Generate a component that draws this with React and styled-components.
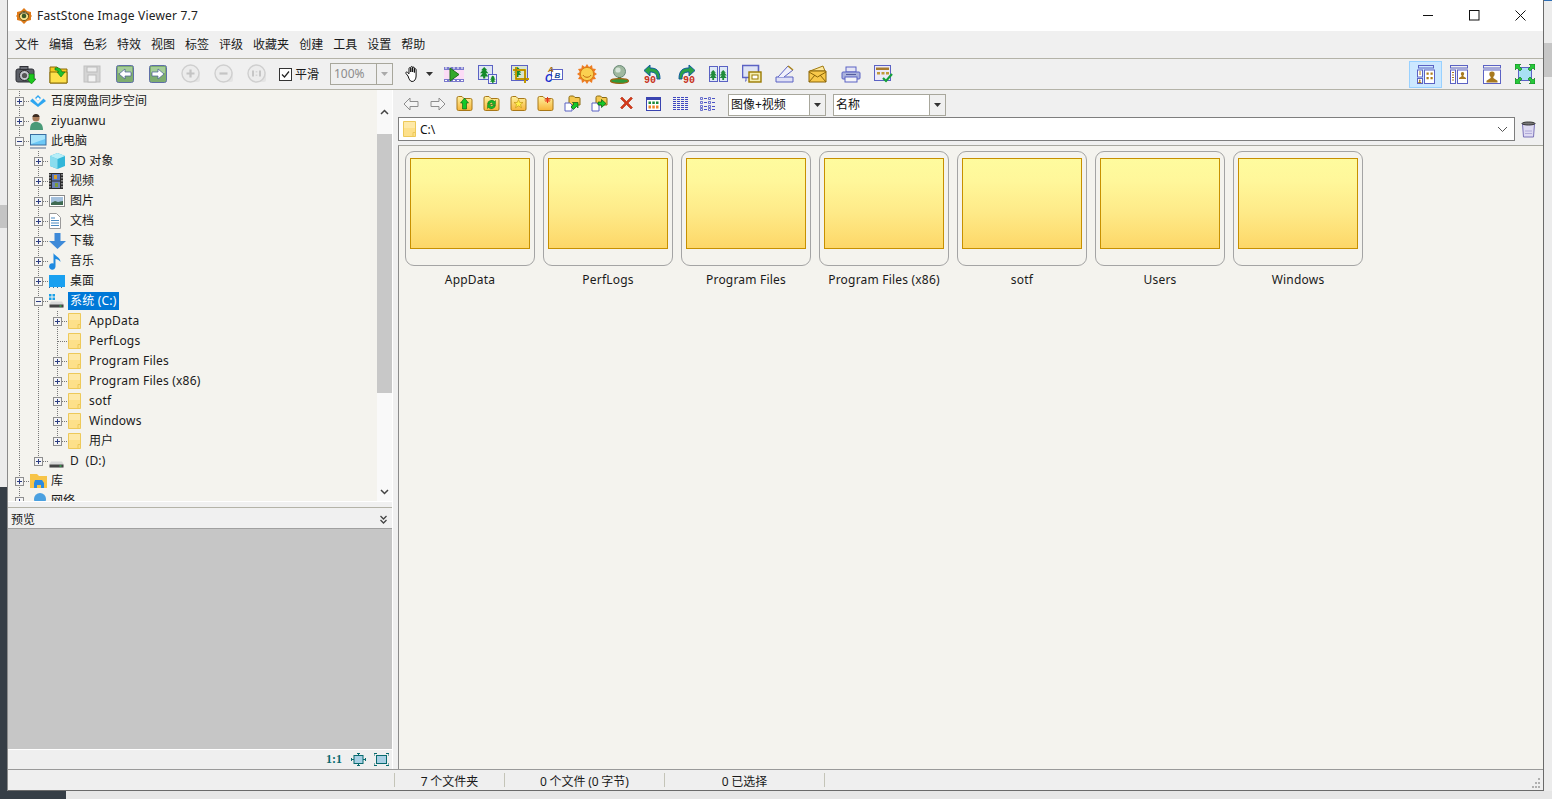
import React from 'react';
import styled, { createGlobalStyle } from 'styled-components';

const UI = '"Noto Sans","Noto Sans CJK SC",sans-serif';

const Global = createGlobalStyle`
  html, body { margin: 0; padding: 0; height: 100%; overflow: hidden; }
  body { font-family: ${UI}; font-size: 12px; color: #1a1a1a; }
  svg { display: block; }
`;

const Desktop = styled.div`
  width: 1552px; height: 799px; box-sizing: border-box; padding-left: 8px; overflow: hidden;
  background:
    linear-gradient(#2f6fb5, #2f6fb5) 1544px 0 / 8px 1px no-repeat,
    linear-gradient(#c6c6c6, #c6c6c6) 1544px 43px / 8px 34px no-repeat,
    linear-gradient(#c4c4c4, #c4c4c4) 0 205px / 8px 23px no-repeat,
    linear-gradient(#363e46, #363e46) 0 487px / 8px 312px no-repeat,
    linear-gradient(#363e46, #363e46) 0 791px / 66px 8px no-repeat,
    linear-gradient(#e6e6e6, #e6e6e6) 0 791px / 1552px 8px no-repeat,
    #ececec;
`;

const Win = styled.div`
  width: 1536px; height: 791px; box-sizing: border-box; display: flex; flex-direction: column;
  background: #f0f0f0; border-right: 1px solid #6a6a6a; border-bottom: 1px solid #6a6a6a;
  box-shadow: -1px 0 0 #8a8a8a;
`;

const TitleBar = styled.div`
  height: 31px; flex: none; background: #fff; display: flex; align-items: center; padding-left: 7px;
`;
const TitleText = styled.span`
  margin-left: 4px; font-size: 12px; letter-spacing: .2px; color: #222;
`;
const WinBtns = styled.div`margin-left: auto; display: flex; height: 31px;`;
const WinBtn = styled.div`
  width: 46px; display: flex; align-items: center; justify-content: center;
`;

const MenuBar = styled.div`
  height: 27px; flex: none; display: flex; align-items: center; padding-left: 7px; gap: 10px;
  background: #f0f0f0;
`;
const MenuItem = styled.span`font-size: 12px; line-height: 16px; color: #1a1a1a;`;

const MainBar = styled.div`
  height: 30px; flex: none; display: flex; align-items: center; padding-left: 1px;
  border-top: 1px solid #b4b3a8; border-bottom: 1px solid #b4b3a8; background: #f0f0f0;
`;
const ToolBtn = styled.div`
  width: ${p => p.$w || 33}px; height: 26px; flex: none; display: flex; align-items: center; justify-content: center;
`;
const ViewBtn = styled(ToolBtn)`
  height: 27px; box-sizing: border-box;
  ${p => p.$active && 'background:#cce8ff;border:1px solid #99d1ff;'}
`;
const Spacer = styled.div`flex: 1;`;
const Check = styled.label`
  display: flex; align-items: center; gap: 3px; margin-left: 6px; font-size: 12px; width: 46px;
`;
const CheckBox = styled.span`
  width: 11px; height: 11px; border: 1px solid #333; background: #fff; display: block; flex: none;
`;
const ZoomBox = styled.div`
  display: flex; width: 63px; height: 22px; box-sizing: border-box; border: 1px solid #a8a79c; margin-left: 5px;
`;
const ZoomValue = styled.div`
  flex: 1; border-right: 1px solid #a8a79c; padding-left: 3px; color: #8c8c8c; font-size: 12px; line-height: 20px;
`;
const ZoomDrop = styled.div`
  width: 15px; display: flex; align-items: center; justify-content: center;
`;
const HandWrap = styled.div`
  width: 46px; margin-left: -1px; display: flex; align-items: center; justify-content: flex-start; gap: 4px; padding-left: 12px; box-sizing: border-box;
`;

const Body = styled.div`flex: 1; min-height: 0; display: flex;`;

const LeftPane = styled.div`
  width: 384px; flex: none; display: flex; flex-direction: column; border-right: 1px solid #fff;
`;
const TreeArea = styled.div`
  height: 412px; flex: none; display: flex; background: #f4f3ee; border-bottom: 1px solid #fff; box-sizing: border-box;
`;
const Tree = styled.div`flex: 1; min-width: 0; overflow: hidden; padding: 1px 0 0 2px;`;
const TreeRow = styled.div`display: flex; align-items: center; height: 20px;`;
const dotsV = 'repeating-linear-gradient(to bottom,#777 0 1px,transparent 1px 2px)';
const dotsH = 'repeating-linear-gradient(to right,#777 0 1px,transparent 1px 2px)';
const Guide = styled.div`
  width: 19px; height: 20px; flex: none;
  ${p => p.$on && `background: ${dotsV} 9px 0 / 1px 100% no-repeat;`}
`;
const Expander = styled.div`
  width: 19px; height: 20px; flex: none; display: flex; align-items: center; justify-content: center;
  background:
    ${dotsH} 10px 10px / 9px 1px no-repeat,
    ${dotsV} 9px 0 / 1px ${p => (p.$last ? '10px' : '100%')} no-repeat;
`;
const PlusBox = styled.div`
  width: 9px; height: 9px; box-sizing: border-box; border: 1px solid #8e8e8e; background: #f4f4f4;
  display: flex; align-items: center; justify-content: center; color: #2f3f7f; position: relative;
  margin-left: -1px;
  &::before { content: ''; width: 5px; height: 1px; background: #2c3c80; }
  ${p => p.$plus && `&::after { content: ''; position: absolute; width: 1px; height: 5px; left: 3px; top: 1px; background: #2c3c80; }`}
`;
const TreeIcon = styled.div`
  width: 20px; height: 20px; flex: none; display: flex; align-items: center; justify-content: flex-start; padding-left: 1px; box-sizing: border-box;
`;
const TreeLabel = styled.span`
  padding: 0 2px; height: 18px; line-height: 18px; font-size: 12px; white-space: pre;
  letter-spacing: ${p => (p.$cjk ? 0 : '.2px')};
  ${p => p.$sel ? 'background:#0078d7;color:#fff;' : 'color:#1a1a1a;'}
`;

const ScrollBar = styled.div`
  width: 15px; flex: none; background: #f9f9f9; display: flex; flex-direction: column; align-items: center;
`;
const ScrollBtn = styled.div`
  height: ${p => p.$h}px; flex: none; width: 100%; display: flex; align-items: center; justify-content: center;
`;
const ScrollThumb = styled.div`height: 259px; flex: none; width: 100%; background: #c8c8c8;`;
const ScrollTrack = styled.div`flex: 1;`;

const PreviewHead = styled.div`
  margin-top: 5px; height: 22px; flex: none; box-sizing: border-box; display: flex; align-items: center; justify-content: space-between;
  border-top: 1px solid #b4b3a8; padding: 1px 5px 0 3px; background: #f0f0f0;
`;
const PreviewImg = styled.div`
  flex: 1; background: #c6c6c6; border-top: 1px solid #a0a0a0; border-bottom: 1px solid #fff; margin-top: -1px;
`;
const PreviewFoot = styled.div`
  height: 19px; flex: none; background: #efefef; display: flex; align-items: center; justify-content: flex-end; gap: 8px; padding-right: 3px;
`;
const OneOne = styled.span`
  font-family: "Liberation Serif", serif; font-weight: bold; font-size: 12px; color: #086a6e; margin-right: 1px;
`;

const RightPane = styled.div`flex: 1; min-width: 0; margin-left: 5px; display: flex; flex-direction: column;`;
const SubBar = styled.div`
  height: 27px; flex: none; display: flex; align-items: center; margin-left: -1px; box-sizing: border-box; padding-top: 2px;
`;
const SubBtn = styled.div`
  width: 27px; height: 24px; flex: none; margin-top: -2px; display: flex; align-items: center; justify-content: center;
`;
const Combo = styled.div`
  display: flex; height: 22px; box-sizing: border-box; margin-left: ${p => p.$ml}px; width: ${p => p.$w}px; background: #fff;
  border: 1px solid #a8a79c; flex: none;
`;
const ComboText = styled.div`
  flex: 1; padding-left: 2px; font-size: 12px; line-height: 20px; color: #111;
`;
const ComboDrop = styled.div`
  width: 15px; background: #f0f0f0; border-left: 1px solid #a8a79c; display: flex; align-items: center; justify-content: center;
`;
const AddressRow = styled.div`
  height: 24px; flex: none; display: flex; align-items: stretch;
`;
const AddressBox = styled.div`
  width: 1117px; box-sizing: border-box; background: #fff; border: 1px solid #7e7e7e; display: flex; align-items: center; padding: 0 6px 0 4px; flex: none;
`;
const AddressText = styled.span`margin-left: 4px; font-size: 12px; color: #111;`;
const TrashWrap = styled.div`flex: 1; display: flex; align-items: center; justify-content: center; padding-right: 1px;`;
const ThumbPane = styled.div`
  flex: 1; margin-top: 4px; min-height: 0; background: #f4f3ee; border-top: 1px solid #a8a8a0; border-left: 1px solid #8c8c8c;
  padding: 5px 0 0 6px; display: flex; gap: 8px; align-items: flex-start;
`;
const Thumb = styled.div`width: 130px; flex: none; display: flex; flex-direction: column; align-items: center;`;
const ThumbCard = styled.div`
  width: 130px; height: 115px; box-sizing: border-box; border: 1px solid #a4a4a4; border-radius: 9px; padding: 6px 4px 0;
`;
const FolderFace = styled.div`
  width: 120px; height: 91px; box-sizing: border-box; border: 1px solid #c79000;
  background: linear-gradient(#fefb9e 0%, #fff79a 25%, #feea88 60%, #fdd768 100%);
`;
const ThumbLabel = styled.div`
  margin-top: 5px; line-height: 18px; font-size: 12px; letter-spacing: .2px; color: #1a1a1a; white-space: nowrap;
`;

const StatusBar = styled.div`
  height: 21px; flex: none; display: flex; align-items: center; box-sizing: border-box;
  border-top: 1px solid #999; background: #efefef; padding-left: 386px;
`;
const StatusCell = styled.div`
  width: ${p => p.$w}px; height: 14px; box-sizing: border-box; border-left: 1px solid #c4c4b8; padding-top: 2px;
  ${p => p.$end && 'border-right: 1px solid #c4c4b8;'}
  display: flex; align-items: flex-start; justify-content: center; font-size: 12px; word-spacing: -.5px; color: #1a1a1a; line-height: 14px;
`;
const Grip = styled.div`margin-left: auto; margin-right: 2px; margin-top: 6px;`;

/* ---------- icons ---------- */
const S = ({ w = 20, h = 20, vb, children }) => (
  <svg width={w} height={h} viewBox={vb || `0 0 ${w} ${h}`}>{children}</svg>
);

const AppLogo = () => (
  <S w={18} h={18}>
    <path d="M9 1l3 3 4 1v3l1 1-1 1v3l-4 1-3 3-3-3-4-1v-3l-1-1 1-1V5l4-1z" fill="#e07a18" />
    <circle cx="9" cy="9" r="4.6" fill="#f6e08a" stroke="#7a5a18" />
    <circle cx="9" cy="9" r="2.3" fill="#3a5a28" />
    <path d="M4.5 8c2-3 7-3 9 0" stroke="#333" fill="none" />
  </S>
);
const Camera = () => (
  <S w={21} h={19}>
    <rect x="1" y="4" width="18" height="13" rx="2" fill="#5b5e66" stroke="#2f3036" />
    <rect x="5" y="1.500" width="8" height="3" fill="#6a6c74" stroke="#2f3036" />
    <circle cx="9.500" cy="10.500" r="5" fill="#c4c6cc" stroke="#2a2a2e" />
    <circle cx="9.500" cy="10.500" r="2.600" fill="#555" />
    <path d="M14 9h5v5h2l-4.500 5-4.500-5h2z" fill="#1ec81e" stroke="#0a7a0a" strokeWidth=".6" />
  </S>
);
const OpenFolder = () => (
  <S w={19} h={19}>
    <path d="M1 2h7l2 2h8v14H1z" fill="#f7c820" stroke="#8a6d08" />
    <path d="M1 7h17v11H1z" fill="#fde04a" stroke="#8a6d08" />
    <path d="M6 3c4-1 6 1 7 4h3l-4 5-4-5h2c-1-1-2-2-4-2z" fill="#20c030" stroke="#0a7a10" strokeWidth=".6" />
  </S>
);
const Floppy = () => (
  <S w={18} h={18}>
    <rect x="1" y="1" width="16" height="16" fill="#d4d4d4" stroke="#c0c0c0" />
    <rect x="4" y="2" width="10" height="5" fill="#ededed" stroke="#bbb" />
    <rect x="5" y="10" width="8" height="7" fill="#f2f2f2" stroke="#bbb" />
  </S>
);
const NavArrow = ({ dir }) => (
  <S w={18} h={18}>
    <rect x=".5" y=".5" width="17" height="17" rx="2" fill="#7ead70" stroke="#5f6fa8" />
    <rect x="2" y="2" width="14" height="6" fill="#a4cd98" />
    <path d={dir === 'l' ? 'M3 9l6-5v3h6v4H9v3z' : 'M15 9L9 4v3H3v4h6v3z'} fill="#fff" stroke="#475a98" strokeWidth=".7" />
  </S>
);
const ZoomGhost = ({ k }) => (
  <S w={20} h={20}>
    <path d="M6 18h11a2 2 0 0 0 2-2V7z" fill="#e4e4e4" />
    <circle cx="9.500" cy="9.500" r="8.500" fill="#ececec" stroke="#cfcfcf" strokeWidth="1.400" />
    {k === '+' && <path d="M5.500 9.500h8M9.500 5.500v8" stroke="#c4c4c4" strokeWidth="2.200" />}
    {k === '-' && <path d="M5.500 9.500h8" stroke="#c4c4c4" strokeWidth="2.200" />}
    {k === '1' && <path d="M6 6.500v6M13 6.500v6M9.500 7.500v.8M9.500 10.700v.8" stroke="#bdbdbd" strokeWidth="1.600" />}
  </S>
);
const Hand = () => (
  <S w={18} h={18}>
    <path d="M4 11L2 8.500c-.8-1 .5-2 1.400-1.200L5 8.800V3.500c0-1.200 1.800-1.200 1.800 0V7V2.400c0-1.200 1.800-1.200 1.800 0V7V3c0-1.200 1.800-1.200 1.800 0v4.500V4.600c0-1.200 1.700-1.200 1.700 0V11c0 3-1.500 5.500-4 5.500H8c-2 0-3-2.500-4-5.500z" fill="#fff" stroke="#111" strokeWidth="1" />
  </S>
);
const Caret = ({ c = '#333' }) => (
  <S w={7} h={4}><path d="M0 0h7L3.500 4z" fill={c} /></S>
);
const blue = '#5b62c4';
const Film = () => (
  <S w={21} h={19}>
    <rect x="0" y="2" width="20" height="15" fill="#fbdcf6" />
    <rect x="0" y="2" width="20" height="3" fill={blue} opacity=".8" />
    <rect x="0" y="14" width="20" height="3" fill={blue} opacity=".8" />
    <path d="M1 3h2M5 3h2M9 3h2M13 3h2M17 3h2M1 15.500h2M5 15.500h2M9 15.500h2M13 15.500h2M17 15.500h2" stroke="#fff" />
    <path d="M6 3l9 6.500L6 16z" fill="#35a82a" stroke="#1f6f18" />
  </S>
);
const tree = (x, y, s = 1, c = '#148a2a') => (
  <path transform={`translate(${x} ${y}) scale(${s})`} d="M4 0l3 3H5.500L8 6H5.500L8 9H5v2H3V9H0l2.500-3H0l2.500-3H1z" fill={c} />
);
const Resize = () => (
  <S w={19} h={19}>
    <rect x=".5" y=".5" width="14" height="14" fill="#dfe6f2" stroke={blue} />
    {tree(2, 2, 1.050)}
    <rect x="10.500" y="9.500" width="8" height="9" fill="#eef0fa" stroke={blue} />
    {tree(12, 10.500, .7)}
  </S>
);
const Crop = () => (
  <S w={19} h={19}>
    <rect x=".5" y=".5" width="16" height="15" fill="#d8e4d0" stroke={blue} />
    {tree(3, 2, .9)}
    <path d="M5 2v12h13M2 5h12v13" fill="none" stroke="#e0b000" strokeWidth="2" />
    <path d="M5 2v12h13M2 5h12v13" fill="none" stroke="#6a5200" strokeWidth=".5" />
  </S>
);
const TextIco = () => (
  <S w={18} h={22}>
    <g fontFamily="Liberation Sans" fontStyle="italic" fontWeight="bold">
      <rect x="6.500" y="6.500" width="11" height="10" fill="#fff" stroke={blue} />
      <text x="3" y="9" fontSize="8" fill="#a06a10">A</text>
      <text x="0" y="19" fontSize="10" fill="#1a2fd0">C</text>
      <text x="9.500" y="15" fontSize="8" fill="#1a50a0">B</text>
    </g>
  </S>
);
const Sun = () => (
  <S w={20} h={20}>
    <path d="M10 0l2 3 3-2 .6 3.500 3.400.5-1.800 3L20 10l-2.800 2 1.800 3-3.400.5L15 19l-3-2-2 3-2-3-3 2-.6-3.500L1 15l1.800-3L0 10l2.800-2L1 5l3.400-.5L5 1l3 2z" fill="#ee7c22" />
    <circle cx="10" cy="10" r="6.600" fill="#fbd050" stroke="#d8801a" />
    <path d="M6 11c1.500 3 6.500 3 8 0" fill="none" stroke="#c06a10" />
  </S>
);
const Globe = () => (
  <S w={19} h={19}>
    <circle cx="9.500" cy="6.500" r="6" fill="#9fb89f" stroke="#6a8a78" />
    <circle cx="8" cy="5" r="2.600" fill="#d6e4d8" />
    <rect x="8" y="12" width="3" height="3" fill="#5a7a4a" />
    <ellipse cx="9.500" cy="16" rx="9" ry="2.400" fill="#2e9a3a" stroke="#a06010" strokeWidth="1.200" />
  </S>
);
const Rotate = ({ flip }) => (
  <S w={20} h={24}>
    <g transform={flip ? 'translate(20 2) scale(-1 1)' : 'translate(0 2)'}>
      <path d="M1 6.500L7 1v3c6 0 10 2 10 11h-3c0-5-2-7-7-7v4z" fill="#2aa248" stroke="#0f5aa0" />
    </g>
    <text x={flip ? 7 : 1} y="21" fontFamily="Liberation Mono" fontWeight="bold" fontSize="10" fill="#c8321a">90</text>
  </S>
);
const Compare = () => (
  <S w={19} h={17}>
    <rect x=".5" y=".5" width="8" height="15" fill="#dfeaf6" stroke={blue} />
    <rect x="10.500" y=".5" width="8" height="15" fill="#dfeaf6" stroke={blue} />
    {tree(.6, 4, .9, '#1f8c3a')}{tree(10.600, 4, .9, '#1f8c3a')}
  </S>
);
const Slides = () => (
  <S w={20} h={20}>
    <path d="M.5 1.500h16v12H.5z" fill="#dfe4f4" stroke={blue} strokeWidth="1.600" />
    <path d="M4 14v3h-1" stroke={blue} fill="none" />
    <rect x="7" y="8" width="12" height="10" fill="#f5eeb0" stroke="#9a7a00" strokeWidth="1.400" />
    <rect x="10" y="11" width="6" height="4" fill="#fff" stroke="#9a7a00" />
  </S>
);
const Scanner = () => (
  <S w={19} h={18}>
    <path d="M1 12h17v5H1z" fill="#dfe0f6" stroke={blue} />
    <path d="M3 12L13 1l5 4-9 7" fill="#f0f0fb" stroke={blue} />
    <path d="M13 1l5 4" stroke="#b08a20" strokeWidth="1.600" />
  </S>
);
const Mail = () => (
  <S w={19} h={18}>
    <path d="M2 6L15 1l2 5z" fill="#fde8a0" stroke="#a07a10" />
    <path d="M1 6h17v11H1z" fill="#f7c84a" stroke="#8a6408" />
    <path d="M1 7l8.500 5L18 7M1 17l6-7M18 17l-6-7" fill="none" stroke="#8a6408" />
  </S>
);
const Printer = () => (
  <S w={20} h={17}>
    <rect x="5" y="1" width="10" height="5" fill="#e6e6f4" stroke={blue} />
    <rect x="1" y="6" width="18" height="7" rx="1" fill="#aab2dc" stroke={blue} />
    <rect x="4" y="11" width="12" height="5" fill="#f4f4f8" stroke={blue} />
    <rect x="5" y="8" width="10" height="1" fill="#555c9c" />
  </S>
);
const Settings = () => (
  <S w={19} h={18}>
    <rect x=".5" y=".5" width="16" height="15" fill="#eceaf8" stroke={blue} />
    <rect x="2" y="2.500" width="13" height="2.500" fill="#a87c30" />
    <rect x="3" y="7" width="3" height="2.500" fill="#c09a3a" /><rect x="7.500" y="7" width="3" height="2.500" fill="#c09a3a" /><rect x="12" y="7" width="3" height="2.500" fill="#c09a3a" />
    <path d="M9 13l3 3 6-7" fill="none" stroke="#14a03a" strokeWidth="2.200" />
  </S>
);
const person = (x, y, s, c = '#a87a20') => (
  <path transform={`translate(${x} ${y}) scale(${s})`} d="M5 0a2.400 2.400 0 0 1 2.400 2.600c0 1-.5 1.800-1.200 2.300V6L10 8.500V10H0V8.500L3.800 6V4.900C3.100 4.400 2.600 3.600 2.600 2.600A2.400 2.400 0 0 1 5 0z" fill={c} />
);
const LayoutA = () => (
  <S w={18} h={19}>
    <rect x="1.500" y=".5" width="15" height="2.500" fill="none" stroke={blue} />
    <rect x=".5" y="5" width="5" height="7" fill="#fff" stroke={blue} /><path d="M2 7h2M2 9h2" stroke="#a87a20" />
    <rect x=".5" y="13.500" width="5" height="5" fill="#fff" stroke={blue} />{person(1, 14.500, .35)}
    <rect x="7.500" y="5" width="10" height="13.500" fill="#fff" stroke={blue} />
    <path d="M9.500 7.500h2.200v2.200H9.500zM13.500 7.500h2.200v2.200h-2.200zM9.500 12h2.200v2.200H9.500zM13.500 12h2.200v2.200h-2.200z" fill="#b07e1c" />
  </S>
);
const LayoutB = () => (
  <S w={18} h={19}>
    <rect x=".5" y=".5" width="17" height="2.500" fill="none" stroke={blue} />
    <rect x=".5" y="5" width="5" height="13.500" fill="#fff" stroke={blue} /><path d="M2 7.500h2M2 10h2M2 12.500h2M2 15h2" stroke="#a87a20" />
    <rect x="7.500" y="5" width="10" height="13.500" fill="#fff" stroke={blue} />{person(9, 7, .7)}
  </S>
);
const LayoutC = () => (
  <S w={18} h={19}>
    <rect x=".5" y=".5" width="17" height="2.500" fill="none" stroke={blue} />
    <rect x=".5" y="5" width="17" height="13.500" fill="#fff" stroke={blue} />{person(3.500, 6.500, 1.100)}
  </S>
);
const FullScreen = () => (
  <S w={20} h={20}>
    <rect x="3.500" y="3.500" width="13" height="13" fill="#a8e0f4" stroke={blue} />
    <path d="M0 0h6l-2 2 3 3-2 2-3-3-2 2zM20 0v6l-2-2-3 3-2-2 3-3-2-2zM0 20v-6l2 2 3-3 2 2-3 3 2 2zM20 20h-6l2-2-3-3 2-2 3 3 2-2z" fill="#26c83a" stroke="#0a6a18" strokeWidth=".6" />
  </S>
);
const Outline = ({ dir }) => (
  <S w={16} h={14}>
    <path d={dir === 'l' ? 'M1 7l6-6v3.500h8v5H7V13z' : 'M15 7L9 1v3.500H1v5h8V13z'} fill="#f4f4f4" stroke="#8e8e8e" />
  </S>
);
const YFolder = ({ children }) => (
  <S w={17} h={17}>
    <defs>
      <linearGradient id="yf" x1="0" y1="0" x2="0" y2="1">
        <stop offset="0" stopColor="#fff2a0" />
        <stop offset="1" stopColor="#f7b43a" />
      </linearGradient>
    </defs>
    <path d="M1 3a1.500 1.500 0 0 1 1.500-1.500H6L8 3.500h6.500A1.500 1.500 0 0 1 16 5v9a1.500 1.500 0 0 1-1.500 1.500h-12A1.500 1.500 0 0 1 1 14z" fill="url(#yf)" stroke="#a87818" />
    {children}
  </S>
);
const DocArrow = ({ path }) => (
  <S w={17} h={17}>
    <path d="M5 2.500a1.500 1.500 0 0 1 1.500-1.500h3l1.500 1.500h4a1 1 0 0 1 1 1V10H5z" fill="#f5c850" stroke="#8a6a10" />
    <path d="M1 8h5l2 2v6H1z" fill="#fff" stroke={blue} />
    <path d={path} fill="#14c828" stroke="#06580e" strokeWidth=".7" />
  </S>
);
const RedX = () => (
  <S w={15} h={15}>
    <path d="M1.500 2.500L3 1l4.500 4.500L12 1l1.500 1.500L9 7l4.500 4.500L12 13 7.500 8.500 3 13l-1.500-1.500L6 7z" fill="#d43a1a" stroke="#b52e10" strokeWidth=".6" />
  </S>
);
const ViewGrid = () => (
  <S w={15} h={14}>
    <rect x=".5" y=".5" width="14" height="13" fill="#fff" stroke="#3a44b0" />
    <rect x="1" y="1" width="13" height="2" fill="#3a44b0" />
    <path d="M2.500 4.500h2.500v2.500H2.500zM6.300 4.500h2.500v2.500H6.300zM10 4.500h2.500v2.500H10z" fill="#1a8a3a" />
    <path d="M2.500 8.500h2.500v3H2.500zM6.300 8.500h2.500v3H6.300zM10 8.500h2.500v3H10z" fill="#f0862a" />
  </S>
);
const ViewList = () => (
  <S w={15} h={14}>
    <path d="M0 .5h15M0 2.500h15M0 4.500h15M0 6.500h15M0 8.500h15M0 10.500h15M0 12.500h15" stroke="#3f48c0" strokeDasharray="3 1" />
  </S>
);
const ViewDetail = () => (
  <S w={16} h={14}>
    <path d="M.5.500h2v2h-2zM.5 4.500h2v2h-2zM.5 8.500h2v2h-2zM.5 11.500h2v2h-2zM8.500.5h2v2h-2zM8.500 4.500h2v2h-2zM8.500 8.500h2v2h-2zM8.500 11.500h2v2h-2z" fill="none" stroke="#4a52c4" strokeWidth=".8" />
    <path d="M4 1.500h3M4 5.500h3M4 9.500h3M4 12.500h3M12 1.500h3M12 5.500h3M12 9.500h3M12 12.500h3" stroke="#4a52c4" />
  </S>
);
const SmallFolder = ({ w = 13, h = 16 }) => (
  <S w={w} h={h} vb="0 0 13 16">
    <path d="M.5.500h12v15H.5z" fill="#fde08a" stroke="#edc95a" />
    <path d="M10 15.500v-4h2.500" fill="none" stroke="#edc95a" />
    <rect x="1" y="1" width="11" height="6" fill="#fee9a8" />
  </S>
);
const Trash = () => (
  <S w={17} h={17}>
    <path d="M2.500 3h12l-1 13h-10z" fill="#dedaf2" stroke="#7a72b8" />
    <path d="M5 12.500h7M5 10h7" stroke="#b0aad8" />
    <ellipse cx="8.500" cy="2.500" rx="6.500" ry="1.500" fill="#777" stroke="#333" />
  </S>
);
const Chev = ({ up, dbl }) => (
  <S w={dbl ? 7 : 9} h={dbl ? 9 : 6}>
    {up ? <path d="M1 5l3.500-3.500L8 5" fill="none" stroke="#444" strokeWidth="1.500" />
      : dbl ? <path d="M.5 1l3 3 3-3M.5 5l3 3 3-3" fill="none" stroke="#444" strokeWidth="1.300" />
        : <path d="M1 1l3.500 3.500L8 1" fill="none" stroke="#444" strokeWidth="1.500" />}
  </S>
);
const FitSmall = () => (
  <S w={15} h={13}>
    <rect x="3" y="2.500" width="9" height="8" fill="#a8d0e4" stroke="#086a6e" />
    <path d="M7.500 0v2M7.500 11v2M0 6.500h3M12 6.500h3M6 .5h3M6 12.500h3M.5 5v3M14.500 5v3" stroke="#086a6e" />
  </S>
);
const FitFull = () => (
  <S w={15} h={13}>
    <rect x="2.500" y="2.500" width="10" height="8" fill="#a8d0e4" stroke="#086a6e" />
    <path d="M0 3V.5h3M12 .5h3V3M0 10v2.500h3M12 12.500h3V10" fill="none" stroke="#086a6e" />
  </S>
);

/* tree icons */
const Baidu = () => (
  <S w={16} h={12}><path d="M8 0l3 3-3 3-3-3zM2.500 3.500L8 9l5.500-5.500L16 6l-8 6-8-6z" fill="#2ea6f0" /><path d="M8 2l2 2-2 2-2-2z" fill="#fff" /></S>
);
const Person = () => (
  <S w={13} h={17}>
    <circle cx="6" cy="5" r="3.600" fill="#a87a58" /><path d="M2.500 4c0-4 7-4 7 0z" fill="#3c2c22" />
    <path d="M0 17c0-6 2-8 6-8s7 2 7 8z" fill="#4a9a78" />
  </S>
);
const Monitor = () => (
  <S w={17} h={15}>
    <rect x=".5" y=".5" width="15.500" height="10.500" fill="#6cc8f6" stroke="#3a6ea0" />
    <path d="M1 1h14v4L1 10z" fill="#a8e4fb" />
    <path d="M0 14h16" stroke="#8a9ab0" strokeWidth="1.500" />
  </S>
);
const Cube = () => (
  <S w={17} h={16}>
    <path d="M8.500 0L16 3v10l-7.500 3L1 13V3z" fill="#33b6d8" />
    <path d="M1 3l7.500 3v10L1 13z" fill="#8adcee" />
    <path d="M8.500 0L16 3 8.500 6 1 3z" fill="#b6eef8" />
  </S>
);
const FilmStrip = () => (
  <S w={14} h={16}>
    <rect x="0" y="0" width="14" height="16" fill="#2c2c2c" />
    <rect x="3" y="1" width="8" height="6.500" fill="#5a78c0" /><rect x="3" y="8.500" width="8" height="6.500" fill="#6a80b8" />
    <rect x="5" y="2" width="3" height="4" fill="#d8a02a" /><rect x="6" y="10" width="3" height="4" fill="#7a9a3a" />
    <path d="M1 1v14M13 1v14" stroke="#ddd" strokeDasharray="1.500 1.500" />
  </S>
);
const Picture = () => (
  <S w={16} h={12}>
    <rect x=".5" y=".5" width="15" height="11" fill="#fff" stroke="#8a8a8a" />
    <rect x="2" y="2" width="12" height="8" fill="#a4c0dc" />
    <path d="M2 8l4-2 3 1 5-1v4H2z" fill="#3f6a52" />
  </S>
);
const Doc = () => (
  <S w={12} h={16}>
    <path d="M.5.500h7l4 4v11H.5z" fill="#fff" stroke="#9a9a9a" />
    <path d="M2 5h4M2 7.500h8M2 10h8M2 12.500h8" stroke="#4a8ac0" />
  </S>
);
const Down = () => (
  <S w={17} h={16}><path d="M5.500 0h6v8H17l-8.500 8L0 8h5.500z" fill="#3e8ad8" /></S>
);
const Note = () => (
  <S w={12} h={17}>
    <path d="M4.500 0c1 3 7 4 7 9-1-2-4-3-5-3v7.500a3.200 3.200 0 1 1-2-3z" fill="#1f8ae0" />
  </S>
);
const DeskIco = () => (
  <S w={16} h={13}>
    <rect x="0" y="0" width="16" height="12" fill="#1aa0f0" />
    <path d="M0 12.500h16" stroke="#3a6a9a" strokeDasharray="1 3" />
  </S>
);
const Drive = ({ win }) => (
  <S w={15} h={14}>
    {win && <path d="M0 0h2.500v2.500H0zM3.500 0H6v2.500H3.500zM0 3.500h2.500V6H0zM3.500 3.500H6V6H3.500z" fill="#1aa0e8" />}
    <path d="M2 7.500h11l1.500 2.500v3.500H.5V10z" fill="#d8d8d8" />
    <rect x=".5" y="10.500" width="14" height="3" fill="#444" />
    <rect x="10.500" y="11.500" width="2" height="1" fill="#2ee05a" />
  </S>
);
const Lib = () => (
  <S w={17} h={14}>
    <path d="M0 0h7l2 2h8v12H0z" fill="#f7c447" />
    <path d="M5 6h7l2 3v5h-3v-3H7v3H4V9z" fill="#2a8ae0" />
  </S>
);
const Net = () => (
  <S w={17} h={16}>
    <circle cx="10" cy="6" r="6" fill="#4aa0e0" />
    <path d="M0 10h10v6H0z" fill="#5a9ad0" />
    <path d="M2 8h8v2H2z" fill="#d8e8f4" />
  </S>
);

const Row = ({ guides = [], exp, last, noBox, icon, label, sel }) => (
  <TreeRow>
    {guides.map((on, i) => <Guide key={i} $on={on} />)}
    <Expander $last={last}>{!noBox && <PlusBox $plus={exp === '+'} />}</Expander>
    <TreeIcon>{icon}</TreeIcon>
    <TreeLabel $sel={sel} $cjk={/^[\u4e00-\u9fff]+$/.test(label)}>{label}</TreeLabel>
  </TreeRow>
);

const menus = ['文件', '编辑', '色彩', '特效', '视图', '标签', '评级', '收藏夹', '创建', '工具', '设置', '帮助'];
const folders = ['AppData', 'PerfLogs', 'Program Files', 'Program Files (x86)', 'sotf', 'Users', 'Windows'];
const L1 = [true];
const L2 = [true, true];
const F = <SmallFolder />;

export default function App() {
  return (
    <Desktop>
      <Global />
      <Win>
        <TitleBar>
          <AppLogo />
          <TitleText>FastStone Image Viewer 7.7</TitleText>
          <WinBtns>
            <WinBtn><S w={11} h={11}><path d="M0 5.500h10" stroke="#111" /></S></WinBtn>
            <WinBtn><S w={11} h={11}><rect x=".5" y=".5" width="9.500" height="9.500" fill="none" stroke="#111" /></S></WinBtn>
            <WinBtn><S w={11} h={11}><path d="M.5.500l10 10M10.500.500l-10 10" stroke="#111" /></S></WinBtn>
          </WinBtns>
        </TitleBar>
        <MenuBar>{menus.map(m => <MenuItem key={m}>{m}</MenuItem>)}</MenuBar>
        <MainBar>
          <ToolBtn><Camera /></ToolBtn>
          <ToolBtn><OpenFolder /></ToolBtn>
          <ToolBtn><Floppy /></ToolBtn>
          <ToolBtn><NavArrow dir="l" /></ToolBtn>
          <ToolBtn><NavArrow dir="r" /></ToolBtn>
          <ToolBtn><ZoomGhost k="+" /></ToolBtn>
          <ToolBtn><ZoomGhost k="-" /></ToolBtn>
          <ToolBtn><ZoomGhost k="1" /></ToolBtn>
          <Check>
            <CheckBox><S w={11} h={11}><path d="M2 5.500l2.500 2.500L9 2.500" fill="none" stroke="#222" strokeWidth="1.200" /></S></CheckBox>
            平滑
          </Check>
          <ZoomBox>
            <ZoomValue>100%</ZoomValue>
            <ZoomDrop><Caret c="#aaa" /></ZoomDrop>
          </ZoomBox>
          <HandWrap><Hand /><Caret /></HandWrap>
          <ToolBtn><Film /></ToolBtn>
          <ToolBtn><Resize /></ToolBtn>
          <ToolBtn><Crop /></ToolBtn>
          <ToolBtn><TextIco /></ToolBtn>
          <ToolBtn><Sun /></ToolBtn>
          <ToolBtn><Globe /></ToolBtn>
          <ToolBtn><Rotate /></ToolBtn>
          <ToolBtn><Rotate flip /></ToolBtn>
          <ToolBtn><Compare /></ToolBtn>
          <ToolBtn><Slides /></ToolBtn>
          <ToolBtn><Scanner /></ToolBtn>
          <ToolBtn><Mail /></ToolBtn>
          <ToolBtn><Printer /></ToolBtn>
          <ToolBtn><Settings /></ToolBtn>
          <Spacer />
          <ViewBtn $active><LayoutA /></ViewBtn>
          <ViewBtn><LayoutB /></ViewBtn>
          <ViewBtn><LayoutC /></ViewBtn>
          <ViewBtn><FullScreen /></ViewBtn>
          <ToolBtn $w={2} />
        </MainBar>
        <Body>
          <LeftPane>
            <TreeArea>
              <Tree>
                <Row exp="+" icon={<Baidu />} label="百度网盘同步空间" />
                <Row exp="+" icon={<Person />} label="ziyuanwu" />
                <Row exp="-" icon={<Monitor />} label="此电脑" />
                <Row guides={L1} exp="+" icon={<Cube />} label="3D 对象" />
                <Row guides={L1} exp="+" icon={<FilmStrip />} label="视频" />
                <Row guides={L1} exp="+" icon={<Picture />} label="图片" />
                <Row guides={L1} exp="+" icon={<Doc />} label="文档" />
                <Row guides={L1} exp="+" icon={<Down />} label="下载" />
                <Row guides={L1} exp="+" icon={<Note />} label="音乐" />
                <Row guides={L1} exp="+" icon={<DeskIco />} label="桌面" />
                <Row guides={L1} exp="-" icon={<Drive win />} label="系统 (C:)" sel />
                <Row guides={L2} exp="+" icon={F} label="AppData" />
                <Row guides={L2} noBox icon={F} label="PerfLogs" />
                <Row guides={L2} exp="+" icon={F} label="Program Files" />
                <Row guides={L2} exp="+" icon={F} label="Program Files (x86)" />
                <Row guides={L2} exp="+" icon={F} label="sotf" />
                <Row guides={L2} exp="+" icon={F} label="Windows" />
                <Row guides={L2} exp="+" last icon={F} label="用户" />
                <Row guides={L1} exp="+" last icon={<Drive />} label="D  (D:)" />
                <Row exp="+" icon={<Lib />} label="库" />
                <Row exp="+" last icon={<Net />} label="网络" />
              </Tree>
              <ScrollBar>
                <ScrollBtn $h={44}><Chev up /></ScrollBtn>
                <ScrollThumb />
                <ScrollTrack />
                <ScrollBtn $h={18}><Chev /></ScrollBtn>
              </ScrollBar>
            </TreeArea>
            <PreviewHead>预览<Chev dbl /></PreviewHead>
            <PreviewImg />
            <PreviewFoot>
              <OneOne>1:1</OneOne>
              <FitSmall />
              <FitFull />
            </PreviewFoot>
          </LeftPane>
          <RightPane>
            <SubBar>
              <SubBtn><Outline dir="l" /></SubBtn>
              <SubBtn><Outline dir="r" /></SubBtn>
              <SubBtn><YFolder><path d="M8.500 3l4 5H10.500v6h-4V8H4.500z" fill="#14c828" stroke="#06580e" strokeWidth=".6" /></YFolder></SubBtn>
              <SubBtn><YFolder><path d="M4.500 9a4 4 0 0 1 7-2.500l1-1v4h-4l1.400-1.200a2 2 0 0 0-3.400.7zM12.500 10a4 4 0 0 1-7 2.500l-1 1v-4h4L7 10.700a2 2 0 0 0 3.400-.7z" fill="#18b828" stroke="#06580e" strokeWidth=".4" /></YFolder></SubBtn>
              <SubBtn><YFolder><path d="M8.500 4.500l1.300 3h3.200l-2.500 2 1 3.300-3-2-3 2 1-3.300-2.500-2h3.200z" fill="#fff04a" stroke="#c09010" strokeWidth=".6" /></YFolder></SubBtn>
              <SubBtn><YFolder><path d="M10.500 2v6M7.500 5h6M8.500 3l4 4M12.500 3l-4 4" stroke="#e8341a" strokeWidth="1" /></YFolder></SubBtn>
              <SubBtn><DocArrow path="M7 12l3-3-1.500-1.500H14V13l-1.500-1.500-3 3z" /></SubBtn>
              <SubBtn><DocArrow path="M7 7h3.500V4.500L15 8.500l-4.500 4V10H7z" /></SubBtn>
              <SubBtn><RedX /></SubBtn>
              <SubBtn><ViewGrid /></SubBtn>
              <SubBtn><ViewList /></SubBtn>
              <SubBtn><ViewDetail /></SubBtn>
              <Combo $ml={7} $w={98}><ComboText>图像+视频</ComboText><ComboDrop><Caret /></ComboDrop></Combo>
              <Combo $ml={7} $w={113}><ComboText>名称</ComboText><ComboDrop><Caret /></ComboDrop></Combo>
            </SubBar>
            <AddressRow>
              <AddressBox>
                <SmallFolder w={13} h={16} />
                <AddressText>C:\</AddressText>
                <Spacer />
                <S w={11} h={7}><path d="M1 1l4.500 4.500L10 1" fill="none" stroke="#555" /></S>
              </AddressBox>
              <TrashWrap><Trash /></TrashWrap>
            </AddressRow>
            <ThumbPane>
              {folders.map(f => (
                <Thumb key={f}>
                  <ThumbCard><FolderFace /></ThumbCard>
                  <ThumbLabel>{f}</ThumbLabel>
                </Thumb>
              ))}
            </ThumbPane>
          </RightPane>
        </Body>
        <StatusBar>
          <StatusCell $w={110}>7 个文件夹</StatusCell>
          <StatusCell $w={160}>0 个文件 (0 字节)</StatusCell>
          <StatusCell $w={161} $end>0 已选择</StatusCell>
          <Grip>
            <S w={11} h={11}>
              <path d="M8 0h2v2H8zM5 4h2v2H5zM8 4h2v2H8zM2 8h2v2H2zM5 8h2v2H5zM8 8h2v2H8z" fill="#b0b0b0" />
            </S>
          </Grip>
        </StatusBar>
      </Win>
    </Desktop>
  );
}
